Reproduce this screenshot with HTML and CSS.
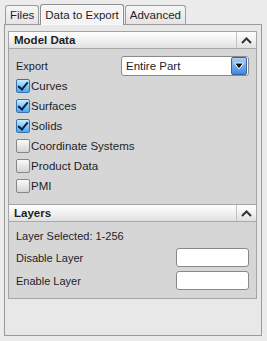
FILE: index.html
```html
<!DOCTYPE html>
<html lang="en">
<head>
  <meta charset="UTF-8">
  <title>Data to Export</title>
  <link rel="stylesheet" href="styles.css">
</head>
<body>
  <div class="tabs">
    <div class="tab">Files</div>
    <div class="tab active">Data to Export</div>
    <div class="tab">Advanced</div>
  </div>

  <div class="panel">
    <div class="section">
      <div class="section-head">
        <span>Model Data</span>
        <span class="toggle">
          <svg width="11" height="7" viewBox="0 0 11 7"><path d="M1 6 L5.5 1.5 L10 6" fill="none" stroke="#333" stroke-width="2"/></svg>
        </span>
      </div>
      <div class="section-body">
        <div class="row export">
          <span>Export</span>
          <div class="select">
            <span>Entire Part</span>
            <span class="select-btn">
              <svg width="10" height="8" viewBox="0 0 10 8"><path d="M0.5 1 L9.5 1 L5 7 Z" fill="#111" stroke="#fff" stroke-width="1"/></svg>
            </span>
          </div>
        </div>
        <label class="check"><span class="box on"></span>Curves</label>
        <label class="check"><span class="box on"></span>Surfaces</label>
        <label class="check"><span class="box on"></span>Solids</label>
        <label class="check"><span class="box"></span>Coordinate Systems</label>
        <label class="check"><span class="box"></span>Product Data</label>
        <label class="check"><span class="box"></span>PMI</label>
      </div>
    </div>

    <div class="section">
      <div class="section-head">
        <span>Layers</span>
        <span class="toggle">
          <svg width="11" height="7" viewBox="0 0 11 7"><path d="M1 6 L5.5 1.5 L10 6" fill="none" stroke="#333" stroke-width="2"/></svg>
        </span>
      </div>
      <div class="section-body layers">
        <div class="row">Layer Selected: 1-256</div>
        <div class="row input-row">
          <span>Disable Layer</span>
          <input type="text" class="field">
        </div>
        <div class="row input-row">
          <span>Enable Layer</span>
          <input type="text" class="field">
        </div>
      </div>
    </div>
  </div>
</body>
</html>
```

FILE: styles.css
```css
body {
  margin: 0;
  padding: 0;
  font-family: 'Liberation Sans', Arial, sans-serif;
  font-size: 11px;
  color: #1e1e26;
  background-color: #ececec;
  width: 267px;
  height: 341px;
  overflow: hidden;
}

.tabs {
  display: flex;
  align-items: flex-end;
  padding: 3px 0 0 5px;
  height: 21px;
}

.tab {
  height: 18px;
  line-height: 19px;
  padding: 0 4px;
  font-size: 11.5px;
  border: 1px solid #9c9c9c;
  border-bottom: none;
  border-radius: 3px 3px 0 0;
  background: linear-gradient(#f6f6f6, #e4e4e4);
  margin-right: 1px;
}

.tab.active {
  height: 20px;
  line-height: 20px;
  background: #f4f4f4;
  border-color: #8c8c8c;
  box-shadow: inset 0 0 0 1px #fafafa;
  position: relative;
  top: 1px;
}

.panel {
  margin: 0 5px 0 4px;
  height: 304px;
  border: 1px solid #9a9a9a;
  background-color: #e8e8e8;
  padding: 6px 4px 0 3px;
}

.section {
  border: 1px solid #a4a4a4;
  border-top: none;
  background-color: #d6d6d6;
}

.section:first-child {
  border-top: 1px solid #a4a4a4;
}

.section-head {
  display: flex;
  justify-content: space-between;
  align-items: center;
  height: 16px;
  padding-left: 5px;
  font-size: 11.5px;
  font-weight: bold;
  background: linear-gradient(#ffffff, #f0f0f0 55%, #e0e0e0);
  border-bottom: 1px solid #a8a8a8;
}

.toggle {
  display: flex;
  align-items: center;
  justify-content: center;
  width: 19px;
  height: 16px;
  border-left: 1px solid #c4c4c4;
}

.section-body {
  padding: 6px 7px 8px 6px;
}

.row {
  display: flex;
  justify-content: space-between;
  align-items: center;
  height: 20px;
  padding-left: 1px;
}

.row.export {
  height: 21px;
}

.select {
  display: flex;
  justify-content: space-between;
  align-items: center;
  width: 121px;
  height: 18px;
  border: 1px solid #8a8a8a;
  border-radius: 3px;
  background: white;
  padding-left: 4px;
  padding-right: 1px;
  font-size: 11.5px;
}

.select-btn {
  display: flex;
  align-items: center;
  justify-content: center;
  width: 14px;
  height: 16px;
  border-radius: 2px;
  background: linear-gradient(#a8d0f6, #4088dc);
  border: 1px solid #2e64a8;
}

.check {
  display: flex;
  align-items: center;
  height: 20px;
  font-size: 11.5px;
}

.box {
  width: 12px;
  height: 12px;
  border: 1px solid #868686;
  border-radius: 2px;
  background: linear-gradient(#fbfbfb, #d4d4d4);
  margin: 0 1px 0 1px;
  position: relative;
}

.box.on {
  border-color: #3a72b0;
  background: linear-gradient(#c6ecff, #48aaee);
}

.box.on::after {
  content: '';
  position: absolute;
  left: 3px;
  top: 0;
  width: 4px;
  height: 8px;
  border: solid #0e1e48;
  border-width: 0 2px 2px 0;
  transform: rotate(40deg);
}

.layers {
  padding-top: 4px;
  padding-bottom: 6px;
}

.input-row {
  height: 23px;
}

.field {
  width: 67px;
  height: 15px;
  border: 1px solid #888;
  border-radius: 3px;
  background: white;
  padding: 1px 2px;
  margin: 0;
}
```
